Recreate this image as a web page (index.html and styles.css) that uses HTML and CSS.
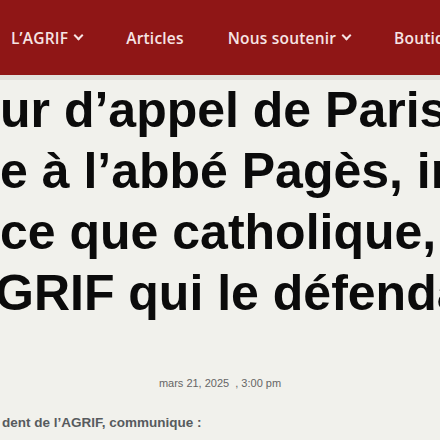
FILE: index.html
```html
<!DOCTYPE html>
<html lang="fr">
<head>
  <meta charset="UTF-8" />
  <meta name="viewport" content="width=device-width, initial-scale=1.0"/>
  <title>L'AGRIF</title>
  <link rel="stylesheet" href="styles.css">
</head>
<body>
  <header class="site-header">
    <nav class="menu">
      <a class="menu-item" href="#">L’AGRIF <span class="chevron"></span></a>
      <a class="menu-item" href="#">Articles</a>
      <a class="menu-item" href="#">Nous soutenir <span class="chevron"></span></a>
      <a class="menu-item" href="#">Boutique</a>
      <a class="menu-item" href="#">Contact</a>
    </nav>
  </header>

  <main class="article">
    <h1 class="title">
      <span class="line">ur d’appel de Paris refuse</span>
      <span class="line">e à l’abbé Pagès, injurié</span>
      <span class="line">ce que catholique,</span>
      <span class="line line-cut">GRIF qui le défendait</span>
    </h1>
    <p class="meta">mars 21, 2025 <span class="time">, 3:00 pm</span></p>
    <p class="lead">dent de l’AGRIF, communique :</p>
  </main>
</body>
</html>
```

FILE: styles.css
```css
html, body {
  margin: 0;
  overflow: hidden;
}

body {
  background-color: #f1f1ec;
  font-family: "Liberation Sans", Arial, sans-serif;
}

.site-header {
  height: 75px;
  background-color: #8f1616;
  border-bottom: 5px solid #e2e1dc;
  display: flex;
  align-items: center;
}

.menu {
  display: flex;
  align-items: center;
  gap: 44px;
  padding-left: 11px;
  white-space: nowrap;
}

.menu-item {
  color: #f6e4e4;
  text-decoration: none;
  font-family: "Open Sans", sans-serif;
  font-weight: 600;
  font-size: 15.5px;
  letter-spacing: 0.2px;
  display: flex;
  align-items: center;
  gap: 7px;
}

.chevron {
  width: 5px;
  height: 5px;
  border-right: 2.5px solid #f6e4e4;
  border-bottom: 2.5px solid #f6e4e4;
  transform: rotate(45deg);
  margin-top: -4px;
}

.title {
  margin: 0;
  font-size: 50px;
  line-height: 61px;
  font-weight: bold;
  color: #0b0b0b;
  white-space: nowrap;
}

.line {
  display: block;
}

.line-cut {
  margin-left: -5px;
}

.meta {
  margin: 53px 0 0;
  text-align: center;
  font-size: 11px;
  color: #666;
}

.time {
  margin-left: 3px;
}

.lead {
  margin: 26px 0 0;
  padding-left: 2px;
  font-size: 13.5px;
  font-weight: bold;
  color: #575b5e;
}
```
